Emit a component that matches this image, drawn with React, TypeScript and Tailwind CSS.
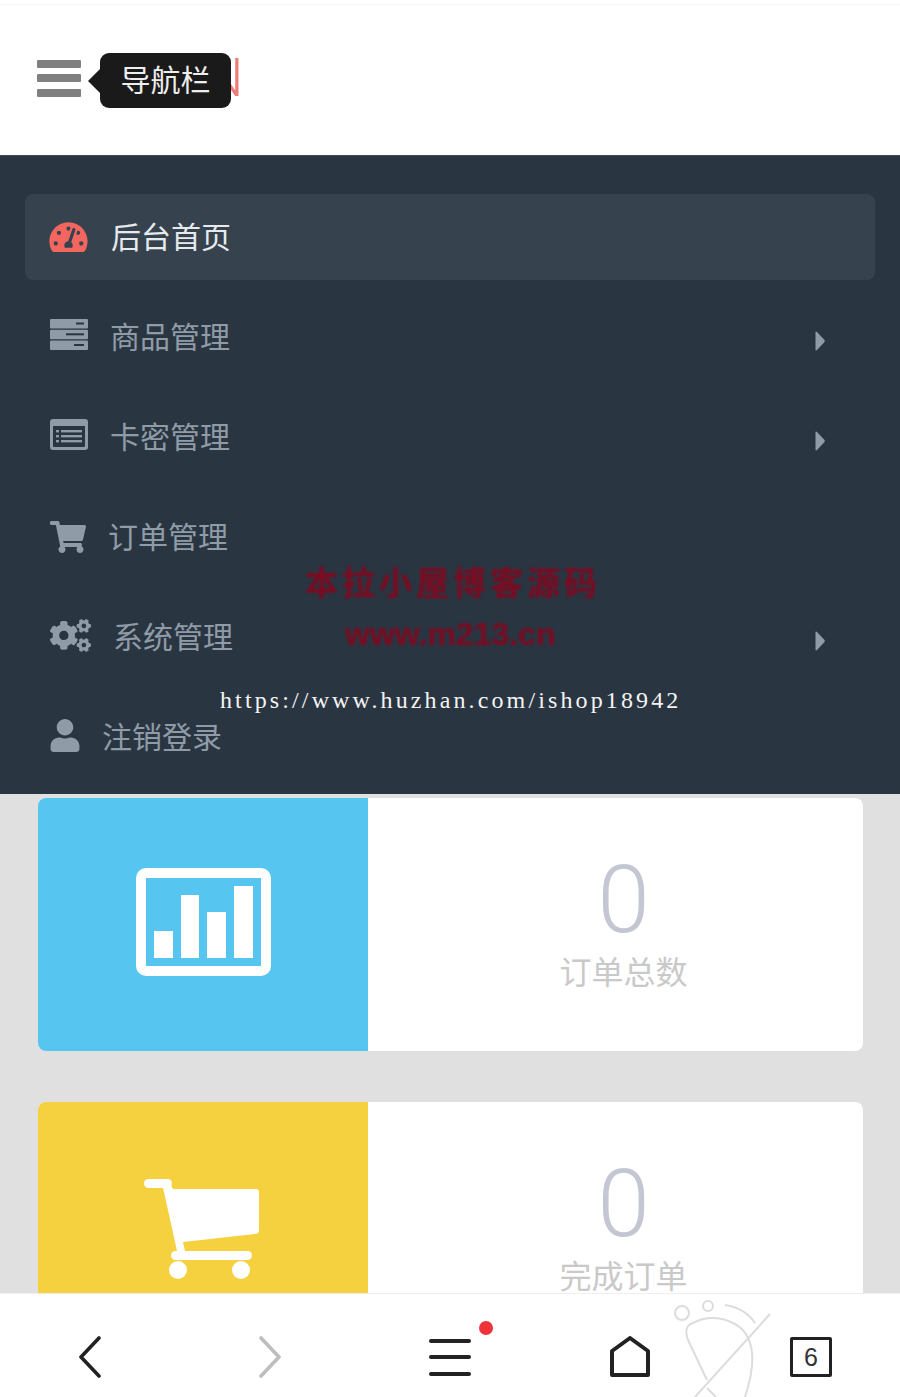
import React from 'react';
import { FaTachometerAlt, FaShoppingCart, FaCogs, FaUser } from 'react-icons/fa';

function ServerIcon({ className }: { className?: string }) {
  return (
    <svg viewBox="0 0 38 31" className={className} fill="currentColor">
      <rect x="0" y="0" width="38" height="9.5" rx="1" />
      <rect x="0" y="10.8" width="38" height="9.5" rx="1" />
      <rect x="0" y="21.5" width="38" height="9.5" rx="1" />
      <rect x="26" y="3.5" width="8" height="2" fill="#2a3542" />
      <rect x="16" y="14.3" width="18" height="2" fill="#2a3542" />
      <rect x="24" y="25" width="10" height="2" fill="#2a3542" />
    </svg>
  );
}

function ListIcon({ className }: { className?: string }) {
  return (
    <svg viewBox="0 0 38 31" className={className} fill="currentColor">
      <path
        fillRule="evenodd"
        d="M3 0h32a3 3 0 0 1 3 3v25a3 3 0 0 1-3 3H3a3 3 0 0 1-3-3V3a3 3 0 0 1 3-3zM3 7v20a1 1 0 0 0 1 1h30a1 1 0 0 0 1-1V7z"
      />
      <rect x="6" y="11" width="3" height="2.4" />
      <rect x="6" y="16" width="3" height="2.4" />
      <rect x="6" y="21" width="3" height="2.4" />
      <rect x="11" y="11" width="21" height="2.4" />
      <rect x="11" y="16" width="21" height="2.4" />
      <rect x="11" y="21" width="21" height="2.4" />
    </svg>
  );
}

function Caret() {
  return (
    <svg viewBox="0 0 10 20" className="w-[10px] h-5 mt-2 text-[#8f9ba6]" fill="currentColor">
      <path d="M0.5 1.5 Q0.5 0 2 1 L9.5 9 Q10 10 9.5 11 L2 19 Q0.5 20 0.5 18.5 Z" />
    </svg>
  );
}

const menuItems = [
  { label: '商品管理', icon: <ServerIcon className="w-[38px] h-[31px] mb-[6px]" />, arrow: true },
  { label: '卡密管理', icon: <ListIcon className="w-[38px] h-[31px] mb-[6px]" />, arrow: true },
  { label: '订单管理', icon: <FaShoppingCart className="w-[36px] h-[32px]" />, arrow: false },
  { label: '系统管理', icon: <FaCogs className="w-[41px] h-[37px] mb-[3px]" />, arrow: true },
  { label: '注销登录', icon: <FaUser className="w-[30px] h-[33px] mb-[3px]" />, arrow: false },
];

function StatCard({ color, icon, label }: { color: string; icon: React.ReactNode; label: string }) {
  return (
    <div className="flex h-[253px] shrink-0 rounded-lg overflow-hidden bg-white">
      <div className={`w-[330px] flex items-center justify-center ${color}`}>{icon}</div>
      <div className="flex-1 flex flex-col items-center pt-[47px] pl-[16px]">
        <div className="text-[94px] leading-[110px] font-light font-['Roboto',sans-serif] text-[#c3c7d1]">0</div>
        <div className="text-[32px] leading-[44px] mt-[-7px] text-[#c9c9c9]">{label}</div>
      </div>
    </div>
  );
}

export default function App() {
  return (
    <div className="relative h-[1397px] flex flex-col overflow-hidden bg-white font-['Noto_Sans_CJK_SC','Noto_Sans',sans-serif]">
      {/* Header */}
      <div className="h-[156px] shrink-0 flex items-center pl-[37px] pt-[1px] border-b border-[#3f4a56] relative">
        <div className="flex flex-col gap-[6.5px] w-[44px]">
          <div className="h-2 rounded-[1px] bg-[#808080]"></div>
          <div className="h-2 rounded-[1px] bg-[#808080]"></div>
          <div className="h-2 rounded-[1px] bg-[#808080]"></div>
        </div>
        <span className="ml-[124px] text-[54px] leading-none font-light font-['Roboto',sans-serif] text-[#ee7d78]">N</span>
        <div className="absolute top-1 inset-x-0 h-px bg-[#f4f4f4]"></div>
        {/* Tooltip */}
        <div className="absolute left-[100px] top-[53px] w-[131px] h-[55px] pb-[5px] rounded-[9px] bg-[#1a1a1a] flex items-center justify-center text-[30px] text-[#eeeeee]">
          <div className="absolute left-[-12px] top-[16px] w-0 h-0 border-y-[12px] border-y-transparent border-r-[12px] border-r-[#1a1a1a]"></div>
          导航栏
        </div>
      </div>

      {/* Side menu */}
      <div className="shrink-0 bg-[#2a3542] px-[25px] pt-[38px]">
        <div className="h-[86px] mb-[14px] rounded-lg bg-[#36424e] flex items-center gap-[23px] pl-[24px] text-[#e6eaed] text-[30px]">
          <FaTachometerAlt className="w-[39px] h-[34px] text-[#f2665f]" />
          <span className="pb-1">后台首页</span>
        </div>
        {menuItems.map((item) => (
          <div key={item.label} className="h-[86px] mb-[14px] flex items-center pl-[25px] pr-[50px] text-[#8f9ba6] text-[30px]">
            <div className="flex items-center gap-[22px] flex-1">
              {item.icon}
              <span className="pb-1">{item.label}</span>
            </div>
            {item.arrow && <Caret />}
          </div>
        ))}
      </div>

      {/* Cards */}
      <div className="flex-1 min-h-0 overflow-hidden bg-[#e0e0e0] pl-[38px] pr-[37px] pt-[4px] flex flex-col gap-[51px]">
        <StatCard
          color="bg-[#56c5f0]"
          label="订单总数"
          icon={
            <svg viewBox="0 0 135 108" className="w-[135px] h-[108px] mb-[5px]">
              <rect x="5" y="5" width="125" height="98" rx="5" fill="none" stroke="#fff" strokeWidth="10" />
              <g fill="#fff">
                <rect x="18" y="63" width="19" height="27" />
                <rect x="45" y="27" width="18" height="63" />
                <rect x="71" y="44" width="19" height="46" />
                <rect x="98" y="18" width="19" height="72" />
              </g>
            </svg>
          }
        />
        <StatCard
          color="bg-[#f5d03f]"
          label="完成订单"
          icon={
            <svg viewBox="0 0 120 100" className="w-[120px] h-[100px]" fill="#fff">
              <rect x="1" y="0" width="28" height="9" rx="4.5" />
              <path d="M19 4h8l3 6h83a3 3 0 0 1 3 3v38a4 4 0 0 1-4 4l-72 8 2 9h-8z" />
              <rect x="28" y="72" width="81" height="9" rx="4.5" />
              <circle cx="35" cy="91" r="9" />
              <circle cx="98" cy="91" r="9" />
            </svg>
          }
        />
      </div>

      {/* Browser bottom bar */}
      <div className="h-[104px] shrink-0 bg-white border-t border-[#eeeeee] grid grid-cols-5 pt-[23px]">
        <div className="flex items-center justify-center h-[80px]">
          <svg viewBox="0 0 24 42" className="w-6 h-[42px]" fill="none" stroke="#222" strokeWidth="3.6" strokeLinecap="round" strokeLinejoin="round">
            <path d="M21 2 L3 21 L21 40" />
          </svg>
        </div>
        <div className="flex items-center justify-center h-[80px]">
          <svg viewBox="0 0 24 42" className="w-6 h-[42px]" fill="none" stroke="#bdbdbd" strokeWidth="3.6" strokeLinecap="round" strokeLinejoin="round">
            <path d="M3 2 L21 21 L3 40" />
          </svg>
        </div>
        <div className="flex items-center justify-center h-[80px]">
          <div className="relative flex flex-col gap-[12.5px] w-[42px]">
            <div className="h-1 rounded-full bg-[#222222]"></div>
            <div className="h-1 rounded-full bg-[#222222]"></div>
            <div className="h-1 rounded-full bg-[#222222]"></div>
            <div className="absolute left-[50px] top-[-18px] w-[14px] h-[14px] rounded-full bg-[#ee3438]"></div>
          </div>
        </div>
        <div className="flex items-center justify-center h-[80px]">
          <svg viewBox="0 0 42 42" className="w-[42px] h-[42px]" fill="none" stroke="#222" strokeWidth="4" strokeLinejoin="round">
            <path d="M21 2 L39 15 V39 H3 V15 Z" />
          </svg>
        </div>
        <div className="flex items-center justify-center h-[80px] pl-[2px]">
          <div className="w-[42px] h-10 border-[3.5px] border-[#222222] rounded-[2px] flex items-center justify-center text-[25px] leading-none font-['Liberation_Sans',sans-serif] text-[#333333]">
            6
          </div>
        </div>
      </div>

      {/* Footprint mark over the bar */}
      <svg viewBox="0 0 110 97" className="absolute left-[670px] top-[1300px] w-[110px] h-[97px]" fill="none" stroke="#dcdcdc" strokeWidth="2">
        <circle cx="12" cy="13" r="7" />
        <circle cx="38" cy="6" r="5" />
        <path d="M55 5 Q75 8 85 23" />
        <path d="M37 80 L18 40 Q13 26 23 23 Q36 16 52 19 Q72 24 78 38 Q88 58 75 97" />
        <path d="M100 14 L25 97" />
        <path d="M37 88 L46 97" />
      </svg>

      {/* Watermarks */}
      <div className="absolute left-[305px] top-[560px] text-[33px] leading-[48px] tracking-[4px] font-bold whitespace-nowrap font-['Liberation_Serif','Noto_Sans_CJK_SC',serif] text-[#7d0a20] blur-[1px]">
        本拉小屋博客源码
      </div>
      <div className="absolute left-[345px] top-[612px] text-[32px] leading-[44px] font-bold whitespace-nowrap font-['Liberation_Sans',sans-serif] text-[#7d0a20] blur-[1px]">
        www.m213.cn
      </div>
      <div className="absolute left-[220px] top-[685px] text-[24px] leading-[30px] tracking-[3.12px] whitespace-nowrap font-['Liberation_Serif',serif] text-[#f4f4f4]">
        https://www.huzhan.com/ishop18942
      </div>
    </div>
  );
}
